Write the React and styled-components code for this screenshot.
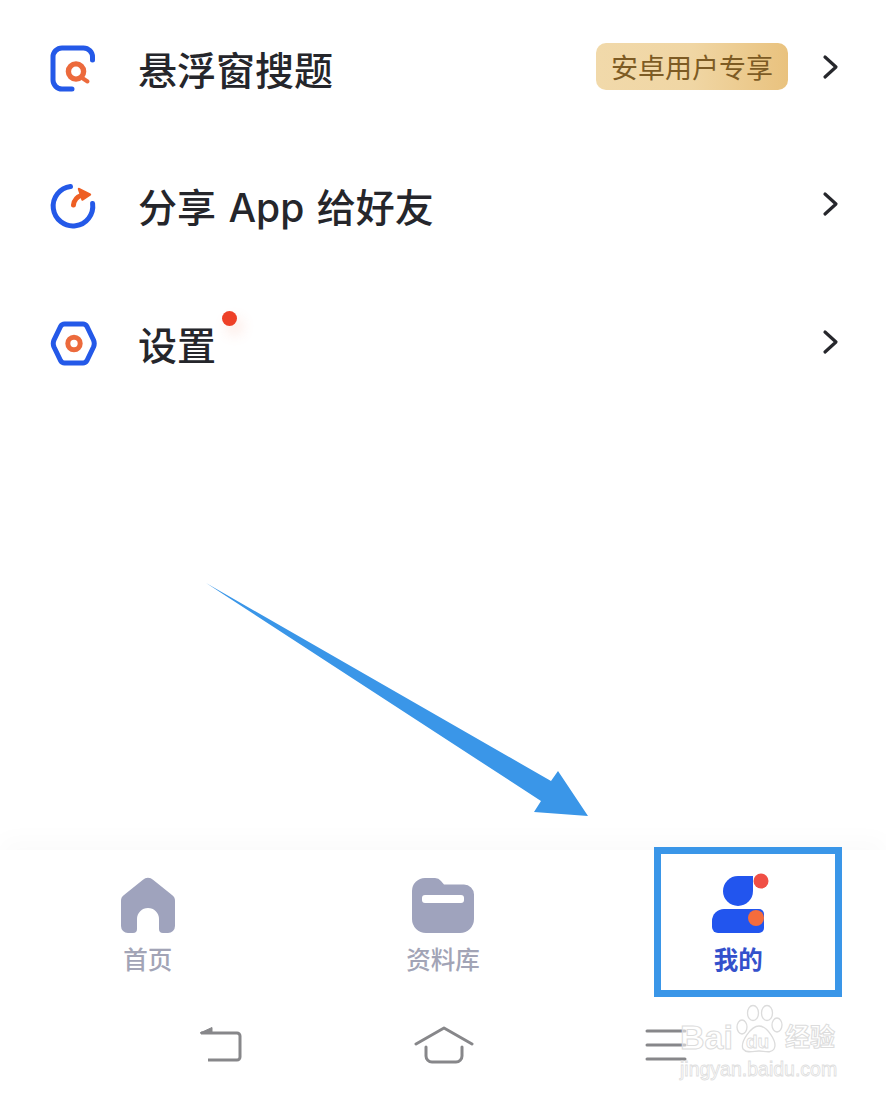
import React from 'react';
import styled, { createGlobalStyle } from 'styled-components';

const GlobalStyle = createGlobalStyle`
    html, body {
        margin: 0;
        padding: 0;
        background: #fff;
    }
`;

const Screen = styled.div`
    position: relative;
    width: 886px;
    height: 1097px;
    overflow: hidden;
    display: flex;
    flex-direction: column;
    background: #fff;
    font-family: "Liberation Sans", "Noto Sans CJK SC", sans-serif;
`;

const List = styled.div`
    flex: 1;
    display: flex;
    flex-direction: column;
`;

const Row = styled.div`
    height: 138px;
    flex: none;
    display: flex;
    align-items: center;
    padding: 0 46px 0 49px;
    box-sizing: border-box;
    &:first-child {
        height: 137px;
    }
`;

const RowIcon = styled.svg`
    width: 48px;
    height: 48px;
    flex: none;
    margin-right: 41px;
`;

const Label = styled.div`
    position: relative;
    font-family: "Inter", "Noto Sans CJK SC", sans-serif;
    font-size: 39px;
    font-weight: 500;
    line-height: 50px;
    word-spacing: 2px;
    color: #25262b;
    margin-top: 4px;
`;

const Dot = styled.span`
    position: absolute;
    left: 84px;
    top: -10px;
    width: 15px;
    height: 15px;
    border-radius: 50%;
    background: #ee4128;
    box-shadow: 5px 8px 14px rgba(240, 110, 70, 0.18);
`;

const Badge = styled.div`
    margin-left: auto;
    margin-top: -4px;
    width: 192px;
    height: 47px;
    border-radius: 10px;
    display: flex;
    align-items: center;
    justify-content: center;
    font-size: 27px;
    color: #7d5b24;
    background: linear-gradient(90deg, #f1d9aa, #f0d6a4 50%, #e9c27e);
`;

const Chevron = styled.svg`
    width: 18px;
    height: 26px;
    flex: none;
    margin-left: auto;
    margin-top: -4px;
    ${Badge} + & {
        margin-left: 34px;
    }
`;

const TabBar = styled.nav`
    height: 150px;
    flex: none;
    display: grid;
    grid-template-columns: repeat(3, 1fr);
    background: #fff;
    box-shadow: 0 -12px 22px rgba(0, 0, 0, 0.018);
`;

const Tab = styled.div`
    position: relative;
    display: flex;
    flex-direction: column;
    align-items: center;
    padding-top: 28px;
    box-sizing: border-box;
`;

const TabIcon = styled.svg`
    width: 64px;
    height: 56px;
    flex: none;
    overflow: visible;
`;

const TabLabel = styled.div`
    margin-top: 12px;
    font-size: 24.5px;
    line-height: 30px;
    font-weight: ${(props) => (props.$active ? 700 : 500)};
    color: ${(props) => (props.$active ? '#3451cc' : '#a2a4b6')};
`;

const HighlightFrame = styled.div`
    position: absolute;
    left: 63px;
    top: -3px;
    width: 188px;
    height: 150px;
    box-sizing: border-box;
    border: 7px solid #3a96e8;
`;

const SystemBar = styled.div`
    height: 97px;
    flex: none;
    display: flex;
    align-items: flex-start;
    gap: 171px;
    padding: 26px 0 0 199px;
    box-sizing: border-box;
`;

const SystemIcon = styled.svg`
    flex: none;
    display: block;
`;

const Arrow = styled.svg`
    position: absolute;
    left: 200px;
    top: 578px;
`;

const Watermark = styled.div`
    position: absolute;
    left: 680px;
    top: 1002px;
    width: 160px;
    color: #fff;
    pointer-events: none;
`;

const MarkTop = styled.div`
    display: flex;
    align-items: flex-end;
    height: 52px;
`;

const MarkWord = styled.span`
    font-size: ${(props) => props.$size}px;
    line-height: 34px;
    font-weight: 700;
    color: rgba(255, 255, 255, 0.55);
    -webkit-text-stroke: 1px #dcdcdc;
`;

const Paw = styled.div`
    position: relative;
    width: 50px;
    height: 50px;
    flex: none;
    margin: 0 1px;
`;

const PawText = styled.span`
    position: absolute;
    left: 12px;
    bottom: 2px;
    font-size: 19px;
    line-height: 20px;
    font-weight: 700;
    color: rgba(255, 255, 255, 0.6);
    -webkit-text-stroke: 0.8px #dcdcdc;
`;

const MarkUrl = styled.div`
    margin-top: 3px;
    font-size: 19.5px;
    line-height: 24px;
    white-space: nowrap;
    color: #fff;
    -webkit-text-stroke: 0.8px #dedede;
`;

const SearchIcon = () => (
    <RowIcon viewBox="0 0 48 48" fill="none" strokeLinecap="round" strokeLinejoin="round">
        <path d="M43.5 15 V12 a9 9 0 0 0 -9 -9 H13 a9 9 0 0 0 -9 9 V35 a9 9 0 0 0 9 9 H23" stroke="#2459e8" strokeWidth="5" />
        <circle cx="27" cy="26.5" r="7.6" stroke="#ec6a3c" strokeWidth="5.4" />
        <path d="M34 33.5 L38.500 36.500" stroke="#ec6a3c" strokeWidth="4" />
    </RowIcon>
);

const ShareIcon = () => (
    <RowIcon viewBox="0 0 48 48" fill="none" strokeLinecap="round" strokeLinejoin="round">
        <path d="M21.500 4.500 A19.800 19.800 0 1 0 43.600 21.500" stroke="#2459e8" strokeWidth="5" />
        <path d="M24.500 23 C25 18 27.500 15 33 13" stroke="#ee5f24" strokeWidth="5" />
        <path d="M30 7 L41 12.500 L33.500 17.500 Z" fill="#ee5f24" stroke="#ee5f24" strokeWidth="2.4" />
    </RowIcon>
);

const SettingIcon = () => (
    <RowIcon viewBox="0 0 48 48" fill="none" strokeLinejoin="round">
        <path
            d="M15.500 4 H34 Q36.500 4 38 6.500 L44.500 20 Q46 23.500 44.500 27 L38 40.500 Q36.500 43 34 43 H15.500 Q13 43 11.500 40.500 L5 27 Q3.500 23.500 5 20 L11.500 6.500 Q13 4 15.500 4 Z"
            stroke="#2459e8"
            strokeWidth="5"
        />
        <circle cx="25" cy="23.5" r="6.2" stroke="#ec6a3c" strokeWidth="5" />
    </RowIcon>
);

const RowChevron = () => (
    <Chevron viewBox="0 0 18 26" fill="none">
        <path d="M3 3 L14 13 L3 23" stroke="#26272c" strokeWidth="3.2" strokeLinecap="round" strokeLinejoin="round" />
    </Chevron>
);

const HomeTabIcon = () => (
    <TabIcon viewBox="0 0 64 56">
        <path
            d="M27 1.800 a7 7 0 0 1 10 0 L56 17 a7 7 0 0 1 3 6 V48 a7 7 0 0 1 -7 7 H47 a4 4 0 0 1 -4 -4 V41 a11 11 0 0 0 -22 0 V51 a4 4 0 0 1 -4 4 H12 a7 7 0 0 1 -7 -7 V23 a7 7 0 0 1 3 -6 Z"
            fill="#9fa3bd"
        />
    </TabIcon>
);

const FolderTabIcon = () => (
    <TabIcon viewBox="0 0 64 56">
        <path
            d="M14 0 H24 a8 8 0 0 1 6 3 L33 6.500 H53 a10 10 0 0 1 10 10 V41 a14 14 0 0 1 -14 14 H15 a14 14 0 0 1 -14 -14 V13 a13 13 0 0 1 13 -13 Z"
            fill="#9fa3bd"
        />
        <rect x="11" y="17" width="42" height="8" rx="3" fill="#fff" />
    </TabIcon>
);

const ProfileTabIcon = () => (
    <TabIcon viewBox="0 0 64 56">
        <path d="M32 -2 H47 V13 A15 15 0 1 1 32 -2 Z" fill="#2255ee" />
        <path d="M18 31 H53 a5 5 0 0 1 5 5 V50 a5 5 0 0 1 -5 5 H12 a6 6 0 0 1 -6 -6 V43 a12 12 0 0 1 12 -12 Z" fill="#2255ee" />
        <circle cx="50" cy="40" r="8" fill="#f56c3c" />
        <circle cx="55" cy="3" r="7.500" fill="#f04f45" />
    </TabIcon>
);

const App = () => {
    return (
        <Screen>
            <GlobalStyle />
            <List>
                <Row>
                    <SearchIcon />
                    <Label>悬浮窗搜题</Label>
                    <Badge>安卓用户专享</Badge>
                    <RowChevron />
                </Row>
                <Row>
                    <ShareIcon />
                    <Label>分享 App 给好友</Label>
                    <RowChevron />
                </Row>
                <Row>
                    <SettingIcon />
                    <Label>
                        设置
                        <Dot />
                    </Label>
                    <RowChevron />
                </Row>
            </List>
            <TabBar>
                <Tab>
                    <HomeTabIcon />
                    <TabLabel>首页</TabLabel>
                </Tab>
                <Tab>
                    <FolderTabIcon />
                    <TabLabel>资料库</TabLabel>
                </Tab>
                <Tab>
                    <ProfileTabIcon />
                    <TabLabel $active>我的</TabLabel>
                    <HighlightFrame />
                </Tab>
            </TabBar>
            <SystemBar>
                <SystemIcon width="44" height="38" viewBox="0 0 44 38" fill="none" stroke="#87878a" strokeWidth="3" strokeLinejoin="round">
                    <path d="M2 7 H38 a3 3 0 0 1 3 3 V31 a3 3 0 0 1 -3 3 H9" />
                    <path d="M1 7 L13 1.500 V7 Z" fill="#87878a" strokeWidth="1" />
                </SystemIcon>
                <SystemIcon width="60" height="38" viewBox="0 0 60 38" fill="none" stroke="#87878a" strokeWidth="3" strokeLinecap="round" strokeLinejoin="round">
                    <path d="M2 18 L30 2 L58 18" />
                    <path d="M12 21 V30 a6 6 0 0 0 6 6 H42 a6 6 0 0 0 6 -6 V21" />
                </SystemIcon>
                <SystemIcon width="42" height="38" viewBox="0 0 42 38" fill="none" stroke="#87878a" strokeWidth="3" strokeLinecap="round">
                    <path d="M2 5 H40 M2 19 H40 M2 33 H40" />
                </SystemIcon>
            </SystemBar>
            <Arrow width="400" height="250" viewBox="0 0 400 250">
                <path d="M6 5 L351 203 L358 193 L388 238 L334 234 L341 223 Z" fill="#3a96e8" />
            </Arrow>
            <Watermark>
                <MarkTop>
                    <MarkWord $size={34}>Bai</MarkWord>
                    <Paw>
                        <svg width="50" height="50" viewBox="0 0 50 50" fill="rgba(255,255,255,0.5)" stroke="#dcdcdc" strokeWidth="1.3">
                            <ellipse cx="8" cy="23" rx="5" ry="7" />
                            <ellipse cx="19" cy="9" rx="5.500" ry="7.500" />
                            <ellipse cx="33" cy="9" rx="5.500" ry="7.500" />
                            <ellipse cx="43" cy="21" rx="5" ry="7" />
                            <path d="M25 22 C33 22 44 38 40 45 C37 50 30 47 25 47 C20 47 13 50 9 45 C6 38 17 22 25 22 Z" />
                        </svg>
                        <PawText>du</PawText>
                    </Paw>
                    <MarkWord $size={25}>经验</MarkWord>
                </MarkTop>
                <MarkUrl>jingyan.baidu.com</MarkUrl>
            </Watermark>
        </Screen>
    );
};

export default App;
